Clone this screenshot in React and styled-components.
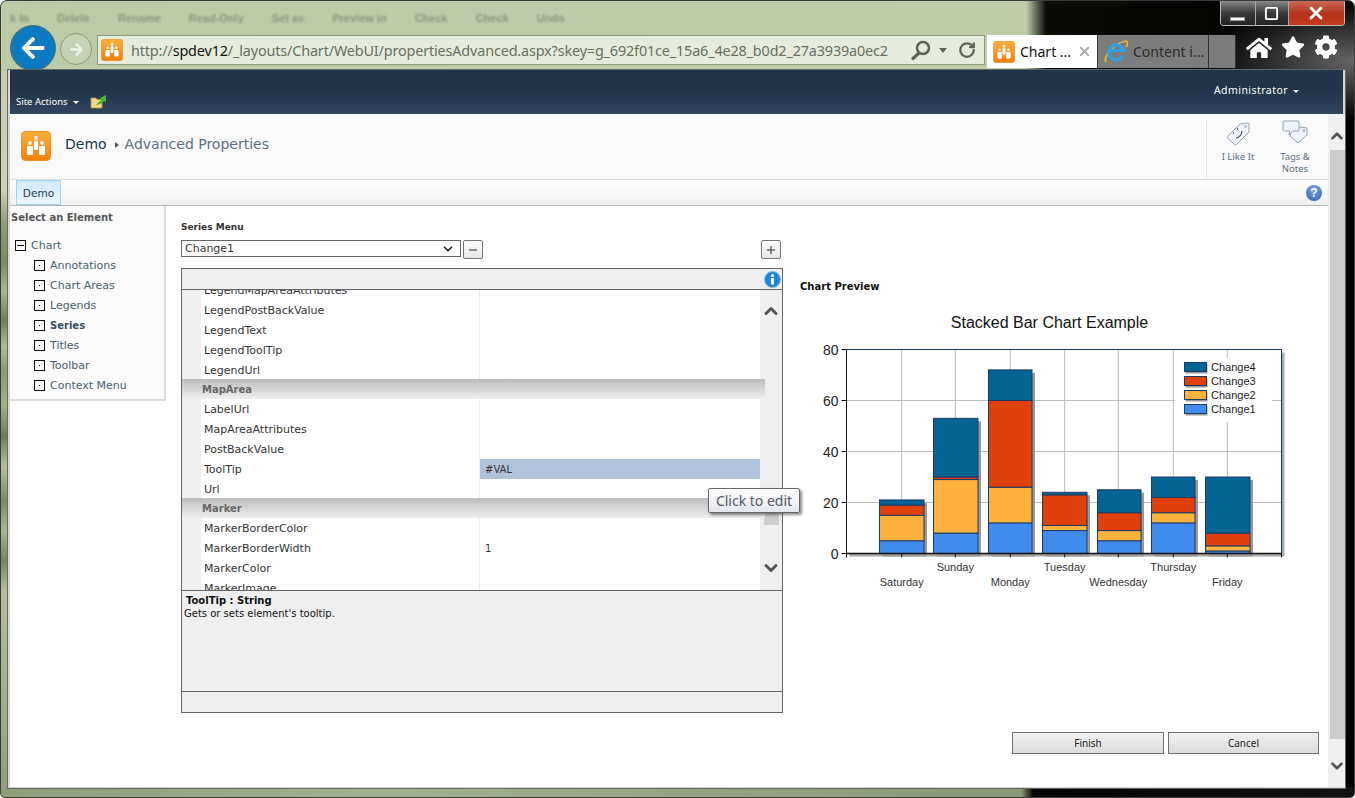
import React from "react";
import styled, { createGlobalStyle } from "styled-components";
import { FaArrowLeft, FaArrowRight, FaHome, FaStar, FaCog } from "react-icons/fa";
import { Minus, Plus, Square, X, RotateCw, ChevronUp, ChevronDown } from "lucide-react";

const GlobalStyle = createGlobalStyle`
  html, body {
    margin: 0;
    width: 1355px;
    height: 798px;
    overflow: hidden;
    font-family: "DejaVu Sans", Verdana, sans-serif;
  }
  * { box-sizing: border-box; }
`;

const Win = styled.div`
  width: 1355px;
  height: 798px;
  border-radius: 7px 7px 5px 5px;
  border: 1px solid #3c3c3c;
  overflow: hidden;
  background:
    linear-gradient(90deg, #8d9d78, #a3b28e 28%, #8a9a74 70%, #8a9a74 1020px, #050505 1032px, #111 100%) 0 100% / 100% 10px no-repeat,
    linear-gradient(180deg, #c6cbb0 0, #cfd0b2 120px, #8f9f78 150px, #7a8a60 190px, #a9b592 220px, #6f7f58 250px, #b0bb98 275px, #8a9a72 300px, #a3af8c 335px, #6c7c55 365px, #b4be9c 395px, #7c8c65 430px, #a9b592 460px, #74845c 490px, #b5bf9d 520px, #a3af8c 620px, #8f9f78 728px) 0 70px / 7px 728px no-repeat,
    radial-gradient(150px 60px at 1355px 60px, #666 0, transparent 100%),
    linear-gradient(90deg, #bccaa6 0, #bfcdab 1025px, #0b0c08 1045px, #000 1355px);
`;

const Chrome = styled.div`
  height: 69px;
  overflow: hidden;
`;

const ChromeTop = styled.div`
  height: 24px;
  display: flex;
  justify-content: space-between;
  padding: 0 9px 0 9px;
`;

const GhostText = styled.div`
  display: flex;
  gap: 28px;
  padding-top: 11px;
  font: bold 11px "Liberation Sans", sans-serif;
  color: #7f8a70;
  filter: blur(1.2px);
  opacity: 0.8;
`;

const WinControls = styled.div`
  display: flex;
  height: 25px;
  width: 125px;
  border: 1px solid #bbb;
  border-top: 0;
  border-radius: 0 0 4px 4px;
  overflow: hidden;
`;

const WinBtn = styled.div`
  flex: ${(p) => p.$grow || 1};
  display: flex;
  align-items: center;
  justify-content: center;
  color: #fff;
  border-left: ${(p) => (p.$first ? "0" : "1px solid #aaa")};
  background: ${(p) => p.$bg || "linear-gradient(180deg,#8a8a8a,#3a3a3a 50%,#222)"};
`;

const MinBar = styled.span`
  width: 15px;
  height: 4px;
  margin-top: 11px;
  background: #fff;
  border: 1px solid #999;
`;

const ToolRow = styled.div`
  display: flex;
  align-items: flex-start;
  height: 46px;
  padding-left: 9px;
`;

const BackBtn = styled.div`
  width: 46px;
  height: 46px;
  border-radius: 50%;
  background: #0b7ac2;
  border: 1px solid #4f6a70;
  color: #fff;
  display: flex;
  align-items: center;
  justify-content: center;
  flex: none;
`;

const ForwardBtn = styled.div`
  width: 32px;
  height: 32px;
  margin: 8px 5px 0 4px;
  border-radius: 50%;
  border: 1px solid #8c9a78;
  background: #c6d2b4;
  color: #eef2e4;
  display: flex;
  align-items: center;
  justify-content: center;
  flex: none;
`;

const AddressBar = styled.div`
  width: 888px;
  height: 30px;
  margin-top: 10px;
  display: flex;
  align-items: center;
  padding-left: 3px;
  background: #e6ecdc;
  border: 1px solid #8c9a78;
  flex: none;
`;

const Url = styled.div`
  margin-left: 8px;
  width: 762px;
  white-space: nowrap;
  overflow: hidden;
  font: 14.4px "Noto Sans", sans-serif;
  color: #667060;
  letter-spacing: -0.15px;
  b { font-weight: normal; color: #111; }
`;

const BarIcons = styled.div`
  display: flex;
  align-items: center;
  color: #5c6650;
  gap: 5px;
  margin-left: 18px;
`;

const Caret = styled.span`
  width: 0;
  height: 0;
  border: 4px solid transparent;
  border-top: 5px solid #5c6650;
  border-bottom: 0;
  margin: 0 6px 0 3px;
`;

const TabStrip = styled.div`
  display: flex;
  height: 33px;
  margin: 10px 0 0 2px;
  flex: none;
`;

const Tab = styled.div`
  width: ${(p) => p.$w}px;
  display: flex;
  align-items: center;
  gap: 5px;
  padding: 0 5px 0 6px;
  border-right: 1px solid #333;
  background: ${(p) => (p.$active ? "#fff" : "#7c7c7c")};
  color: ${(p) => (p.$active ? "#111" : "#2a2a2a")};
  font: 14px "Noto Sans", sans-serif;
  white-space: nowrap;
`;

const TabClose = styled.span`
  margin-left: auto;
  color: #aaa;
  display: flex;
`;

const Tools = styled.div`
  display: flex;
  gap: 9px;
  margin: 10px 0 0 10px;
  color: #fff;
`;

const Page = styled.div`
  width: 1337px;
  height: 718px;
  margin-left: 7px;
  border: 2px solid #d6d6d6;
  border-width: 0 2px 1px 2px;
  outline: 1px solid #666;
  background: #fff;
  display: flex;
  flex-direction: column;
`;

const Header = styled.div`
  height: 44px;
  flex: none;
  display: flex;
  justify-content: space-between;
  background: linear-gradient(180deg, #20344a 0, #20344a 45%, #30465f 100%);
  color: #fff;
`;

const SiteActions = styled.div`
  display: flex;
  align-items: center;
  height: 20px;
  margin: 21px 0 0 6px;
  font: 9.5px "Noto Sans", sans-serif;
  gap: 11px;
`;

const SmallCaret = styled.span`
  display: inline-block;
  width: 0;
  height: 0;
  margin-left: 5px;
  vertical-align: 1px;
  border: 3px solid transparent;
  border-top: 3px solid #fff;
  border-bottom: 0;
`;

const UserMenu = styled.div`
  margin: 13px 44px 0 0;
  font: 10.5px "Noto Sans", sans-serif;
  letter-spacing: 0.45px;
`;

const Content = styled.div`
  flex: 1;
  min-height: 0;
  display: grid;
  grid-template-columns: 1318px 1fr;
`;

const Left = styled.div`
  display: flex;
  flex-direction: column;
  min-width: 0;
`;

const TitleRow = styled.div`
  height: 66px;
  display: flex;
  align-items: center;
  padding: 0 0 2px 11px;
  background: linear-gradient(180deg, #fff, #f9f9f9 30%);
  border-bottom: 1px solid #ddd;
`;

const Crumbs = styled.div`
  margin-left: 14px;
  padding-bottom: 4px;
  flex: 1;
  display: flex;
  align-items: center;
  font-size: 14px;
  color: #5c6f82;
  span:first-child { color: #17384f; }
`;

const CrumbArrow = styled.i`
  width: 0;
  height: 0;
  margin: 2px 6px 0 8px;
  border: 3.5px solid transparent;
  border-left: 4px solid #555;
  border-right: 0;
`;

const Social = styled.div`
  height: 58px;
  width: 115px;
  margin: 6px 7px 0 0;
  align-self: flex-start;
  display: flex;
  border-left: 1px solid #e2e2e2;
`;

const SocialItem = styled.div`
  width: ${(p) => p.$w}px;
  display: flex;
  flex-direction: column;
  align-items: center;
  font: 9.5px/12px "Noto Sans", sans-serif;
  color: #5c6f82;
  text-align: center;
`;

const SocialIcon = styled.div`
  height: 31px;
  padding-top: ${(p) => p.$top}px;
`;

const NavRow = styled.div`
  height: 26px;
  flex: none;
  display: flex;
  justify-content: space-between;
  align-items: center;
  padding: 0 6px 0 6px;
  background: linear-gradient(180deg, #fff, #f0f0f0);
  border-bottom: 1px solid #b5b5b5;
`;

const NavTab = styled.div`
  width: 45px;
  height: 25px;
  display: flex;
  align-items: center;
  justify-content: center;
  font-size: 10.6px;
  color: #1e3a52;
  background: linear-gradient(180deg, #cfeaff, #eaf6ff);
  border: 1px solid #9fd2f5;
`;

const HelpIcon = styled.div`
  width: 16px;
  height: 16px;
  border-radius: 50%;
  background: radial-gradient(circle at 50% 30%, #7ea6e0, #2b5fb0);
  color: #fff;
  font: bold 12px/16px "Liberation Sans", sans-serif;
  text-align: center;
`;

const Body = styled.div`
  flex: 1;
  min-height: 0;
  display: flex;
`;

const Sidebar = styled.div`
  width: 156px;
  height: 195px;
  padding: 6px 0 0 1px;
  flex: none;
  background: #fbfbfb;
  border-right: 2px solid #ddd;
  border-bottom: 2px solid #ddd;
`;

const SideTitle = styled.div`
  height: 12px;
  margin-bottom: 11px;
  font: bold 10px/12px "DejaVu Sans", sans-serif;
  color: #555;
`;

const TreeRow = styled.div`
  height: 20px;
  display: flex;
  align-items: center;
  gap: 5px;
  padding-left: ${(p) => (p.$root ? 4 : 23)}px;
  font-size: ${(p) => (p.$active ? 10 : 11)}px;
  font-weight: ${(p) => (p.$active ? "bold" : "normal")};
  color: ${(p) => (p.$active ? "#3c4c5c" : "#47606a")};
`;

const TreeBox = styled.span`
  width: 11px;
  height: 11px;
  flex: none;
  border: 1px solid #111;
  display: flex;
  align-items: center;
  justify-content: center;
  &::after {
    content: "";
    width: ${(p) => (p.$open ? 7 : 1)}px;
    height: 1px;
    background: #111;
  }
`;

const Main = styled.div`
  flex: 1;
  min-width: 0;
  display: grid;
  grid-template-columns: 602px 1fr;
  column-gap: 17px;
  padding-left: 15px;
`;

const EditorCol = styled.div`
  padding-top: 15px;
`;

const FieldLabel = styled.div`
  height: 12px;
  font: bold 9px/12px "DejaVu Sans", sans-serif;
  color: #333;
`;

const SeriesRow = styled.div`
  height: 19px;
  margin: 7px 0 9px;
  display: flex;
  align-items: flex-start;
  gap: 2px;
`;

const SelectBox = styled.div`
  width: 280px;
  height: 17px;
  padding: 0 5px 0 3px;
  display: flex;
  align-items: center;
  justify-content: space-between;
  border: 1px solid #666;
  font-size: 11px;
  color: #333;
`;

const SquareBtn = styled.div`
  width: 20px;
  height: 19px;
  display: flex;
  align-items: center;
  justify-content: center;
  margin-left: ${(p) => p.$push || 0}px;
  border: 1px solid #777;
  border-radius: 2px;
  color: #666;
  background: linear-gradient(180deg, #fff, #e6e6e6);
`;

const Panel = styled.div`
  position: relative;
  height: 445px;
  border: 1px solid #666;
  background: #efefef;
`;

const PanelHead = styled.div`
  height: 21px;
  display: flex;
  justify-content: flex-end;
  align-items: center;
  padding-right: 1px;
  border-bottom: 1px solid #666;
`;

const ScrollArea = styled.div`
  height: 300px;
  display: grid;
  grid-template-columns: 578px 1fr;
  overflow: hidden;
`;

const PropList = styled.div`
  margin-top: -10px;
`;

const PropRow = styled.div`
  display: grid;
  grid-template-columns: 19px 279px 280px;
  height: 20px;
  font-size: 11px;
  line-height: 21px;
  color: #333;
`;

const Gutter = styled.div`
  background: #efefef;
`;

const PropName = styled.div`
  padding-left: 3px;
  background: #fff;
  border-bottom: 1px solid #eee;
  border-right: 1px solid #eee;
`;

const PropValue = styled.div`
  padding-left: 5px;
  font-size: 10px;
  background: ${(p) => (p.$selected ? "#afc3dc" : "#fff")};
  border-bottom: 1px solid #eee;
`;

const SectionRow = styled.div`
  position: relative;
  z-index: 1;
  width: 583px;
  height: 20px;
  margin-top: -1px;
  padding-left: 20px;
  font: bold 10px/22px "DejaVu Sans", sans-serif;
  color: #666;
  background: linear-gradient(180deg, #bcbcbc, #efefef);
`;

const ScrollRail = styled.div`
  display: flex;
  flex-direction: column;
  align-items: center;
  padding-top: 11px;
  color: #555;
`;

const Thumb = styled.div`
  width: 15px;
  height: 35px;
  margin: 169px 0 33px;
  background: #ccc;
`;

const Description = styled.div`
  height: 101px;
  border-top: 1px solid #666;
  padding: 3px 2px;
  font-size: 10px;
  line-height: 13px;
  color: #111;
  b { display: block; padding-left: 2px; }
`;

const PanelFoot = styled.div`
  height: 21px;
  border-top: 1px solid #666;
`;

const HoverTip = styled.div`
  position: absolute;
  left: 526px;
  top: 219px;
  z-index: 2;
  width: 92px;
  height: 25px;
  border: 1px solid #666;
  border-radius: 2px;
  background: linear-gradient(180deg, #fff, #e4e7ee);
  box-shadow: 2px 2px 3px rgba(0, 0, 0, 0.45);
  font: 14px/23px "Noto Sans", sans-serif;
  color: #57575f;
  text-align: center;
  white-space: nowrap;
`;

const PreviewCol = styled.div`
  display: flex;
  flex-direction: column;
  padding: 75px 9px 33px 0;
`;

const PreviewTitle = styled.div`
  height: 12px;
  margin-bottom: 7px;
  font: bold 10px/12px "DejaVu Sans", sans-serif;
  color: #111;
`;

const Actions = styled.div`
  margin-top: auto;
  display: flex;
  justify-content: flex-end;
  gap: 4px;
`;

const ActionBtn = styled.div`
  width: ${(p) => p.$w}px;
  height: 22px;
  display: flex;
  align-items: center;
  justify-content: center;
  font: 10px "Noto Sans", sans-serif;
  color: #222;
  border: 1px solid #707070;
  background: linear-gradient(180deg, #f0f0f0, #dcdcdc);
`;

const PageScroll = styled.div`
  display: flex;
  flex-direction: column;
  align-items: center;
  padding-top: 13px;
  background: #efefef;
  color: #555;
`;

const PageThumb = styled.div`
  width: 15px;
  height: 589px;
  margin: 5px 0 18px;
  background: #ccc;
`;

const SiteIcon = ({ size = 30 }) => (
  <svg width={size} height={size} viewBox="0 0 30 30" style={{ flex: "none" }}>
    <defs>
      <linearGradient id="site-orange" x1="0" y1="0" x2="0" y2="1">
        <stop offset="0" stopColor="#fdb03c" />
        <stop offset="1" stopColor="#f37f0c" />
      </linearGradient>
    </defs>
    <rect x="0.5" y="0.5" width="29" height="29" rx="4" fill="url(#site-orange)" stroke="#e8912a" />
    <g fill="#fff">
      <circle cx="9" cy="12" r="1.9" />
      <rect x="6" y="15" width="6" height="9" rx="1" />
      <circle cx="15" cy="7" r="1.9" />
      <rect x="13" y="10" width="4" height="9" rx="1" />
      <circle cx="21" cy="12" r="1.9" />
      <rect x="18" y="15" width="6" height="9" rx="1" />
    </g>
  </svg>
);

const IeIcon = () => (
  <svg width="24" height="25" viewBox="0 0 24 25" fill="none" style={{ flex: "none" }}>
    <path d="M2 23 C-1 18 10 4 22 2 C24 2 24 5 22 8" stroke="#e8b62a" strokeWidth="1.7" />
    <path d="M19 17 A7.5 7.5 0 1 1 19.6 11.5 H5" stroke="#2fa0e0" strokeWidth="3.2" />
  </svg>
);

const SearchIcon = () => (
  <svg width="20" height="20" viewBox="0 0 20 20" fill="none" stroke="currentColor">
    <circle cx="12" cy="8" r="6" strokeWidth="2.5" />
    <path d="M8 13 L2 18.5" strokeWidth="3.2" strokeLinecap="round" />
  </svg>
);

const FolderUp = () => (
  <svg width="17" height="16" viewBox="0 0 17 16">
    <path d="M1 5 h5 l1 1.5 h5 v8.5 h-11 z" fill="#f2d98b" stroke="#b8963f" strokeWidth="0.8" />
    <path d="M6 12 C8 9 10 8 11.5 7 L10 5 L16 2 L16 9 L14 8 C12 10 9 12 6 12 z" fill="#4fb32f" />
  </svg>
);

const LikeIcon = () => (
  <svg width="24" height="24" viewBox="0 0 24 24" fill="#f1f5fb" stroke="#8fa2ba">
    <path d="M2 14 L14 2 L22 1 Q23 1 23 2 L23 10 L11 22 Q9.5 23.5 8 22 L2 16.5 Q1 15 2 14z" />
    <circle cx="19.5" cy="4.5" r="1" fill="#fff" />
    <path d="M10 16 C13.5 15.5 15.5 13 16 9" fill="none" strokeWidth="1.2" stroke="#445" />
    <circle cx="7.5" cy="11" r="0.8" fill="#445" stroke="none" />
    <circle cx="11.5" cy="7" r="0.8" fill="#445" stroke="none" />
  </svg>
);

const TagsIcon = () => (
  <svg width="26" height="24" viewBox="0 0 26 24" fill="#f1f5fb" stroke="#8fa2ba">
    <path d="M9 12 L18 7 L25 8 L25 15 L16 23 L8 16 z" />
    <circle cx="22" cy="10.5" r="1" fill="#fff" />
    <path d="M2 1 H16 Q17 1 17 2 V10 Q17 11 16 11 H11 L7 15 L7.5 11 H2 Q1 11 1 10 V2 Q1 1 2 1z" />
  </svg>
);

const InfoIcon = () => (
  <svg width="17" height="17" viewBox="0 0 17 17">
    <circle cx="8.5" cy="8.5" r="8" fill="#1d86cf" stroke="#7cc0ea" />
    <circle cx="8.5" cy="4.6" r="1.5" fill="#fff" />
    <rect x="7.1" y="7" width="2.8" height="6.6" fill="#fff" />
  </svg>
);

const series = [
  { name: "Change1", color: "#428bee" },
  { name: "Change2", color: "#fdb23e" },
  { name: "Change3", color: "#e0410a" },
  { name: "Change4", color: "#056494" },
];

const days = [
  { name: "Saturday", x: 79.5, w: 44.5, tick: 101.7, low: true, values: [5, 10, 4, 2] },
  { name: "Sunday", x: 133.5, w: 44.5, tick: 155.3, values: [8, 21, 1, 23] },
  { name: "Monday", x: 188.5, w: 43.5, tick: 210.3, low: true, values: [12, 14, 34, 12] },
  { name: "Tuesday", x: 242.5, w: 44.5, tick: 264.7, values: [9, 2, 12, 1] },
  { name: "Wednesday", x: 297.5, w: 43.5, tick: 318.3, low: true, values: [5, 4, 7, 9] },
  { name: "Thursday", x: 351.5, w: 43.5, tick: 373.3, values: [12, 4, 6, 8] },
  { name: "Friday", x: 405.5, w: 44.5, tick: 427.3, low: true, values: [1, 2, 5, 22] },
];

const plot = { left: 46.5, right: 481.5, top: 49.5, bottom: 253.5 };
const unit = (plot.bottom - plot.top) / 80;
const chartFont = '"Liberation Sans", Arial, sans-serif';

const StackedChart = () => (
  <svg width="510" height="300" viewBox="0 0 510 300" style={{ display: "block" }}>
    <text x="249.5" y="28" textAnchor="middle" fontFamily={chartFont} fontSize="16" fill="#111">
      Stacked Bar Chart Example
    </text>
    <rect x={plot.left + 3} y={plot.top + 3} width={plot.right - plot.left} height={plot.bottom - plot.top} fill="#aaa" />
    <rect x={plot.left} y={plot.top} width={plot.right - plot.left} height={plot.bottom - plot.top} fill="#fff" />
    {[0, 20, 40, 60, 80].map((v) => {
      const y = plot.bottom - v * unit;
      return (
        <g key={v}>
          <line x1={plot.left} x2={plot.right} y1={y} y2={y} stroke="#bbb" />
          <line x1={plot.left - 5} x2={plot.left} y1={y} y2={y} stroke="#111" />
          <text x={plot.left - 8} y={y + 5} textAnchor="end" fontFamily={chartFont} fontSize="14" fill="#222">
            {v}
          </text>
        </g>
      );
    })}
    {days.map((d) => (
      <line key={d.name} x1={d.tick} x2={d.tick} y1={plot.top} y2={plot.bottom} stroke="#bbb" />
    ))}
    <rect x="375" y="58" width="97" height="64" fill="#fff" />
    {days.map((d) => {
      let base = 0;
      const total = d.values.reduce((a, b) => a + b, 0);
      return (
        <g key={d.name}>
          <rect x={d.x + 3} y={plot.bottom - total * unit + 3} width={d.w} height={total * unit} fill="#999" />
          {d.values.map((v, i) => {
            const y = plot.bottom - (base + v) * unit;
            base += v;
            return <rect key={i} x={d.x} y={y} width={d.w} height={v * unit} fill={series[i].color} stroke="#1a3a66" />;
          })}
          <line x1={d.tick} x2={d.tick} y1={plot.bottom} y2={plot.bottom + 4} stroke="#111" />
          <text x={d.tick} y={d.low ? 286 : 271} textAnchor="middle" fontFamily={chartFont} fontSize="11" fill="#333">
            {d.name}
          </text>
        </g>
      );
    })}
    <line x1={plot.left} x2={plot.right} y1={plot.top} y2={plot.top} stroke="#1a3a66" />
    <line x1={plot.right} x2={plot.right} y1={plot.top} y2={plot.bottom} stroke="#1a3a66" />
    <line x1={plot.left} x2={plot.left} y1={plot.top} y2={plot.bottom + 4} stroke="#111" />
    <line x1={plot.left} x2={plot.right} y1={plot.bottom} y2={plot.bottom} stroke="#111" strokeWidth="1.5" />
    <line x1={plot.right} x2={plot.right} y1={plot.bottom} y2={plot.bottom + 4} stroke="#111" />
    {[...series].reverse().map((s, i) => (
      <g key={s.name}>
        <rect x="385.5" y={64.5 + i * 14} width="22" height="9" fill="#999" />
        <rect x="384.5" y={62.5 + i * 14} width="22" height="9" fill={s.color} stroke="#1a3a66" />
        <text x="411" y={71 + i * 14} fontFamily={chartFont} fontSize="11" fill="#222">
          {s.name}
        </text>
      </g>
    ))}
  </svg>
);

const groups = [
  {
    rows: [
      ["LegendMapAreaAttributes"],
      ["LegendPostBackValue"],
      ["LegendText"],
      ["LegendToolTip"],
      ["LegendUrl"],
    ],
  },
  {
    title: "MapArea",
    rows: [["LabelUrl"], ["MapAreaAttributes"], ["PostBackValue"], ["ToolTip", "#VAL", true], ["Url"]],
  },
  {
    title: "Marker",
    rows: [["MarkerBorderColor"], ["MarkerBorderWidth", "1"], ["MarkerColor"], ["MarkerImage"]],
  },
];

const treeItems = ["Annotations", "Chart Areas", "Legends", "Series", "Titles", "Toolbar", "Context Menu"];

export default function App() {
  return (
    <Win>
      <GlobalStyle />
      <Chrome>
        <ChromeTop>
          <GhostText>
            <span>k In</span>
            <span>Delete</span>
            <span>Rename</span>
            <span>Read-Only</span>
            <span>Set as</span>
            <span>Preview in</span>
            <span>Check</span>
            <span>Check</span>
            <span>Undo</span>
          </GhostText>
          <WinControls>
            <WinBtn $first $grow={35}>
              <MinBar />
            </WinBtn>
            <WinBtn $grow={33}>
              <Square size={15} strokeWidth={3} />
            </WinBtn>
            <WinBtn $grow={57} $bg="linear-gradient(180deg,#c9695a,#b5301a 55%,#c43c20)">
              <X size={20} strokeWidth={3.4} />
            </WinBtn>
          </WinControls>
        </ChromeTop>
        <ToolRow>
          <BackBtn>
            <FaArrowLeft size={26} />
          </BackBtn>
          <ForwardBtn>
            <FaArrowRight size={15} />
          </ForwardBtn>
          <AddressBar>
            <SiteIcon size={22} />
            <Url>
              http://<b>spdev12</b>/_layouts/Chart/WebUI/propertiesAdvanced.aspx?skey=g_692f01ce_15a6_4e28_b0d2_27a3939a0ec2
            </Url>
            <BarIcons>
              <SearchIcon />
              <Caret />
              <RotateCw size={18} strokeWidth={3} />
            </BarIcons>
          </AddressBar>
          <TabStrip>
            <Tab $active $w={111}>
              <SiteIcon size={22} />
              Chart ...
              <TabClose>
                <X size={15} strokeWidth={3} />
              </TabClose>
            </Tab>
            <Tab $w={111}>
              <IeIcon />
              Content i...
            </Tab>
            <Tab $w={27} />
          </TabStrip>
          <Tools>
            <FaHome size={26} />
            <FaStar size={24} />
            <FaCog size={24} />
          </Tools>
        </ToolRow>
      </Chrome>
      <Page>
        <Header>
          <SiteActions>
            <span>
              Site Actions
              <SmallCaret />
            </span>
            <FolderUp />
          </SiteActions>
          <UserMenu>
            Administrator
            <SmallCaret />
          </UserMenu>
        </Header>
        <Content>
          <Left>
            <TitleRow>
              <SiteIcon />
              <Crumbs>
                <span>Demo</span>
                <CrumbArrow />
                <span>Advanced Properties</span>
              </Crumbs>
              <Social>
                <SocialItem $w={62}>
                  <SocialIcon $top={2}>
                    <LikeIcon />
                  </SocialIcon>
                  I Like It
                </SocialItem>
                <SocialItem $w={52}>
                  <SocialIcon $top={0}>
                    <TagsIcon />
                  </SocialIcon>
                  Tags &amp;
                  <br />
                  Notes
                </SocialItem>
              </Social>
            </TitleRow>
            <NavRow>
              <NavTab>Demo</NavTab>
              <HelpIcon>?</HelpIcon>
            </NavRow>
            <Body>
              <Sidebar>
                <SideTitle>Select an Element</SideTitle>
                <TreeRow $root>
                  <TreeBox $open />
                  Chart
                </TreeRow>
                {treeItems.map((item) => (
                  <TreeRow key={item} $active={item === "Series"}>
                    <TreeBox />
                    {item}
                  </TreeRow>
                ))}
              </Sidebar>
              <Main>
                <EditorCol>
                  <FieldLabel>Series Menu</FieldLabel>
                  <SeriesRow>
                    <SelectBox>
                      Change1
                      <ChevronDown size={14} strokeWidth={3} color="#222" />
                    </SelectBox>
                    <SquareBtn>
                      <Minus size={12} strokeWidth={3} />
                    </SquareBtn>
                    <SquareBtn $push={276}>
                      <Plus size={12} strokeWidth={3} />
                    </SquareBtn>
                  </SeriesRow>
                  <Panel>
                    <PanelHead>
                      <InfoIcon />
                    </PanelHead>
                    <ScrollArea>
                      <PropList>
                        {groups.map((g, gi) => (
                          <React.Fragment key={gi}>
                            {g.title && <SectionRow>{g.title}</SectionRow>}
                            {g.rows.map(([name, value, selected]) => (
                              <PropRow key={name}>
                                <Gutter />
                                <PropName>{name}</PropName>
                                <PropValue $selected={selected}>{value}</PropValue>
                              </PropRow>
                            ))}
                          </React.Fragment>
                        ))}
                      </PropList>
                      <ScrollRail>
                        <ChevronUp size={20} strokeWidth={3.5} />
                        <Thumb />
                        <ChevronDown size={20} strokeWidth={3.5} />
                      </ScrollRail>
                    </ScrollArea>
                    <Description>
                      <b>ToolTip : String</b>
                      Gets or sets element's tooltip.
                    </Description>
                    <PanelFoot />
                    <HoverTip>Click to edit</HoverTip>
                  </Panel>
                </EditorCol>
                <PreviewCol>
                  <PreviewTitle>Chart Preview</PreviewTitle>
                  <StackedChart />
                  <Actions>
                    <ActionBtn $w={152}>Finish</ActionBtn>
                    <ActionBtn $w={151}>Cancel</ActionBtn>
                  </Actions>
                </PreviewCol>
              </Main>
            </Body>
          </Left>
          <PageScroll>
            <ChevronUp size={18} strokeWidth={3.5} />
            <PageThumb />
            <ChevronDown size={18} strokeWidth={3.5} />
          </PageScroll>
        </Content>
      </Page>
    </Win>
  );
}
